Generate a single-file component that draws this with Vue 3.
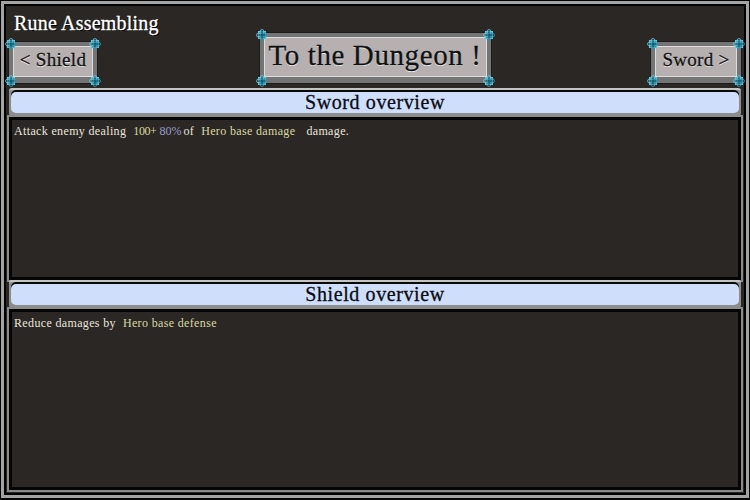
<script setup>
const corners = ['tl', 'tr', 'bl', 'br']
const buttons = [
  { label: '< Shield', size: 'small', place: 'left' },
  { label: 'To the Dungeon !', size: 'big', place: 'center' },
  { label: 'Sword >', size: 'small wide', place: 'right' }
]
const sections = [
  {
    title: 'Sword overview',
    kind: 'first',
    parts: [
      { text: 'Attack enemy dealing', cls: '' },
      { text: '100+', cls: 'y num' },
      { text: '80%', cls: 'b' },
      { text: 'of', cls: 'of' },
      { text: 'Hero base damage', cls: 'y' },
      { text: 'damage.', cls: 'last' }
    ]
  },
  {
    title: 'Shield overview',
    kind: 'second',
    parts: [
      { text: 'Reduce damages by', cls: '' },
      { text: 'Hero base defense', cls: 'y' }
    ]
  }
]
</script>

<template>
  <div class="screen">
    <div class="frame">
      <h1 class="title">Rune Assembling</h1>
      <header class="head">
        <div v-for="b in buttons" :key="b.label" :class="['slot', b.place]">
          <button :class="['btn', b.size]">
            <svg v-for="c in corners" :key="c" :class="['knot', c]" viewBox="0 0 12 12" fill="none">
              <rect x="2.5" y="2.5" width="7" height="7" fill="#2f93ad" stroke="#6cc4d8" />
              <circle cx="6" cy="2.6" r="2" stroke="#5fbcd2" />
              <circle cx="2.6" cy="6" r="2" stroke="#5fbcd2" />
              <circle cx="9.4" cy="6" r="2" stroke="#2f93ad" />
              <circle cx="6" cy="9.4" r="2" stroke="#2f93ad" />
              <path d="M6 2V10M2 6H10" stroke="#0e4a5e" />
            </svg>
            <span class="label">{{ b.label }}</span>
          </button>
        </div>
      </header>

      <section v-for="s in sections" :key="s.title" :class="['section', s.kind]">
        <div class="bar"><h2>{{ s.title }}</h2></div>
        <div class="panel">
          <p><span v-for="p in s.parts" :key="p.text" :class="p.cls">{{ p.text }}</span></p>
        </div>
      </section>
    </div>
  </div>
</template>

<style>
html, body { margin: 0; background: #000; }
</style>

<style scoped>
.screen {
  position: relative;
  width: 750px;
  height: 500px;
  box-sizing: border-box;
  padding: 1px 1px 2px;
  background: #050505;
  font-family: "Liberation Serif", serif;
}
.frame {
  height: 100%;
  box-sizing: border-box;
  border: 3px solid #a3a3a3;
  background: #2b2725;
  box-shadow: inset 0 0 0 2px #000;
  display: flex;
  flex-direction: column;
  padding: 0 5px;
}
.title {
  flex: none;
  height: 28px;
  margin: 0;
  padding: 7px 0 0 5px;
  box-sizing: border-box;
  font-size: 20px;
  font-weight: 400;
  line-height: 24px;
  color: #fff;
  letter-spacing: 0.2px;
  text-shadow: 1px 1px 0 #000;
  -webkit-text-stroke: 0.3px #fff;
}
.head {
  height: 56px;
  flex: none;
  display: grid;
  grid-template-columns: 1fr auto 1fr;
  align-items: end;
  padding-bottom: 5px;
  box-sizing: border-box;
}
.slot { display: flex; }
.center { justify-content: center; }
.right { justify-content: flex-end; }
.btn {
  position: relative;
  display: flex;
  align-items: center;
  justify-content: center;
  box-sizing: border-box;
  padding: 0 0 3px;
  border: 4px solid #747474;
  border-bottom-width: 6px;
  background: #b6b0b0;
  box-shadow: inset 0 0 0 1px #dcdcdc;
  outline: 1px solid #1c1c1c;
  color: #111;
  font-family: inherit;
  text-shadow: 0 1px 0 #eee;
  white-space: nowrap;
  -webkit-text-stroke: 0.3px #111;
}
.small { width: 88px; height: 41px; font-size: 19px; letter-spacing: 0.3px; }
.wide { width: 90px; }
.big { width: 231px; height: 50px; font-size: 29px; letter-spacing: 0.6px; }
.knot {
  position: absolute;
  width: 12px;
  height: 12px;
}
.tl { left: -8px; top: -8px; }
.tr { right: -8px; top: -8px; }
.bl { left: -8px; bottom: -10px; }
.br { right: -8px; bottom: -10px; }

.section { display: flex; flex-direction: column; }
.first { height: 192px; }
.second { flex: 1; min-height: 0; padding-bottom: 5px; }
.bar {
  position: relative;
  flex: none;
  height: 28px;
  box-sizing: border-box;
  padding: 2px 2px 3px;
  background: #8d8d8d;
  border-top: 2px solid #c4c4c4;
  border-radius: 3px;
  text-align: center;
}
.bar h2 {
  height: 21px;
  margin: 0;
  background: #cfdffb;
  border-radius: 5px;
  box-shadow: 0 -2px 0 #0a0a0a;
  font-size: 20px;
  font-weight: 400;
  line-height: 20px;
  color: #0c0c14;
  letter-spacing: 0.6px;
  -webkit-text-stroke: 0.3px #0c0c14;
}
.panel {
  flex: 1;
  min-height: 0;
  margin-top: 1px;
  background: #2b2725;
  border: 3px solid #050505;
  box-shadow: 0 0 0 2px #8a8a8a;
  padding: 4px 2px;
}
.panel p {
  margin: 0;
  display: flex;
  gap: 7px;
  font-size: 12px;
  line-height: 14px;
  color: #e9e6df;
  letter-spacing: 0.35px;
}
.y { color: #d8d8a0; }
.num { letter-spacing: -0.4px; }
.b { color: #9a9cc8; margin-left: -4px; letter-spacing: 0; }
.of { margin-left: -5px; }
.last { margin-left: 4px; }
</style>
